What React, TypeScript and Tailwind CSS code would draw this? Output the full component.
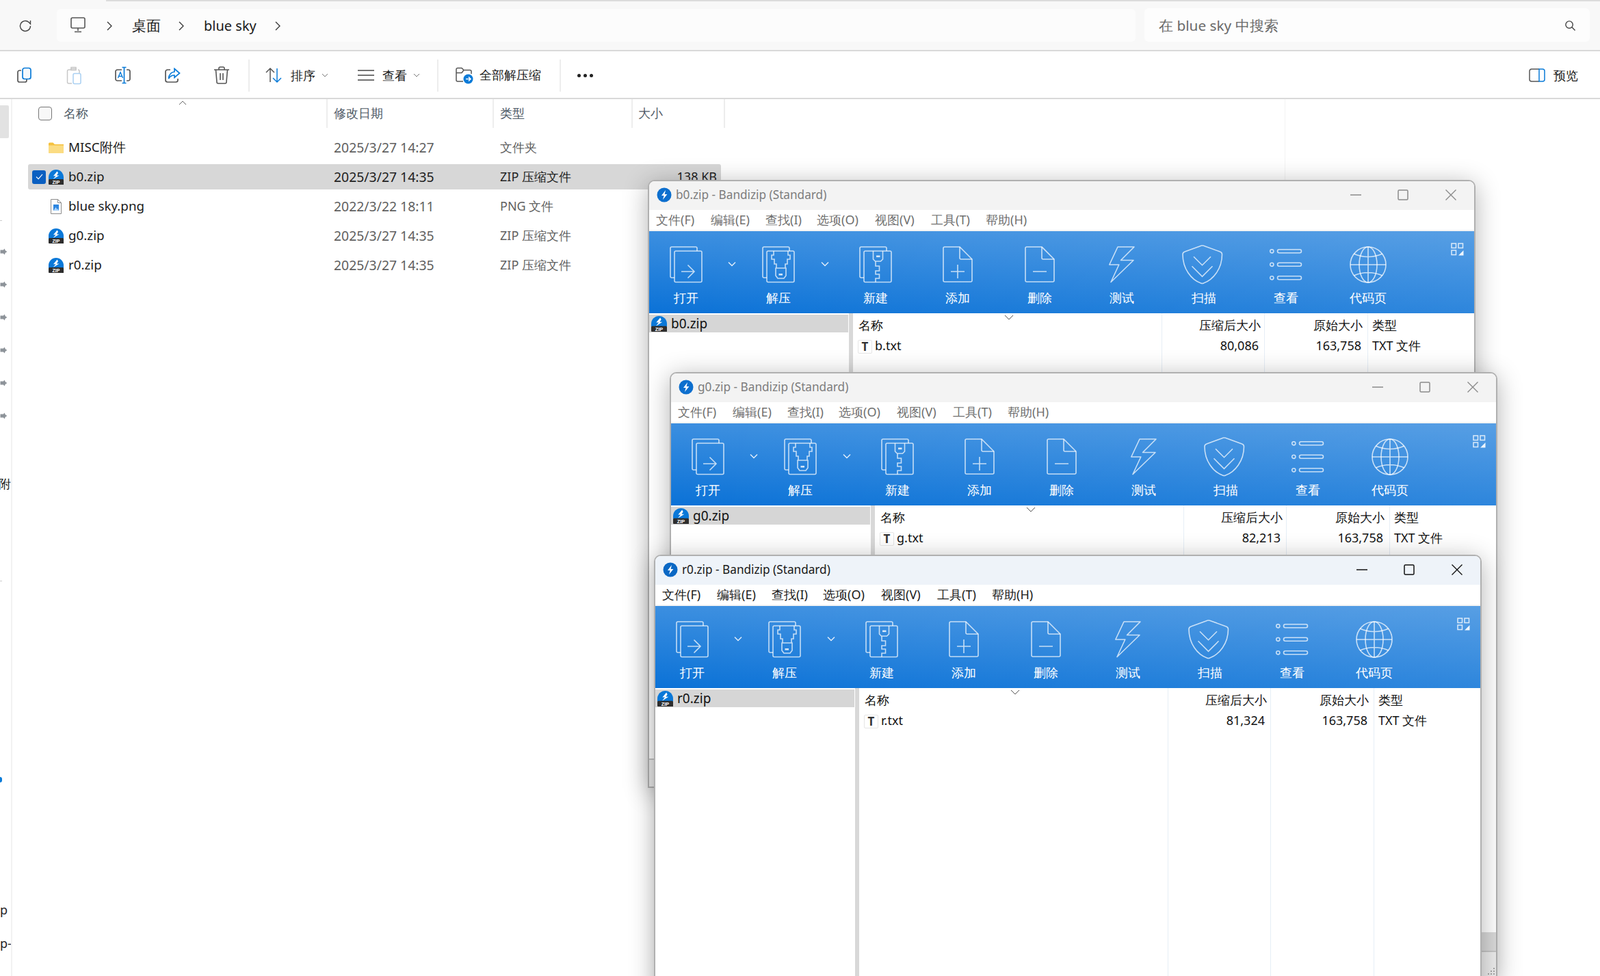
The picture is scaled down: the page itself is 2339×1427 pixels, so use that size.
import React from "react";

const FONT = "font-['Noto_Sans','Noto_Sans_CJK_SC',sans-serif]";
const S = { stroke: "rgba(255,255,255,0.72)", strokeWidth: 1.6, fill: "none" } as const;

function ZipIcon({ small = false }: { small?: boolean }) {
  const size = small ? "w-[23px] h-[23px]" : "w-[22px] h-[22px]";
  return (
    <svg viewBox="0 0 22 22" className={`${size} shrink-0`}>
      <path d="M11 0a11 11 0 0 1 11 11v4H0v-4A11 11 0 0 1 11 0Z" fill="#0a78d8" />
      <path d="M12.6 2.5 7 9.2h3.6L6.6 14l9-5.6h-3.8l2.2-3.4Z" fill="#fff" />
      <path d="M1.5 14h19a1.5 1.5 0 0 1 1.5 1.5V22H1a1 1 0 0 1-1-1v-5.5A1.5 1.5 0 0 1 1.5 14Z" fill="#2e2e2e" />
      <text x="11" y="20.8" textAnchor="middle" fontSize="7" fontWeight="700" fill="#fff" fontFamily="Liberation Sans">ZIP</text>
    </svg>
  );
}

function TitleIcon({ active }: { active: boolean }) {
  return (
    <svg viewBox="0 0 22 22" className="w-[22px] h-[22px] shrink-0">
      <circle cx="11" cy="11" r="10.5" fill={active ? "#0b68c4" : "#0d6fce"} />
      <path d="M13 4 7 12h3.6l-1.6 6 6.4-8h-3.8Z" fill="#fff" />
    </svg>
  );
}

function OpenIcon() {
  return (
    <svg viewBox="0 0 48 54" className="w-[48px] h-[54px]" {...S}>
      <path d="M7 46H3a2 2 0 0 1-2-2V3a2 2 0 0 1 2-2h35a2 2 0 0 1 2 2v4" />
      <rect x="7" y="7" width="40" height="45.5" rx="2" />
      <path d="M17 37h19M26.5 27.5 36 37l-9.5 9.5" />
    </svg>
  );
}
function ExtractIcon() {
  return (
    <svg viewBox="0 0 48 54" className="w-[48px] h-[54px]" {...S}>
      <path d="M7 46H3a2 2 0 0 1-2-2V3a2 2 0 0 1 2-2h35a2 2 0 0 1 2 2v4" />
      <rect x="7" y="7" width="40" height="45.5" rx="2" />
      <path d="M17 7v6h-3v6h4v7h3v6h-1v11l3 4h9l3-4V32h-1v-6h3v-7h4v-6h-3V7M20 32h14" />
      <rect x="24.5" y="40" width="5.5" height="2.6" fill="rgba(255,255,255,0.8)" stroke="none" />
    </svg>
  );
}
function NewIcon() {
  return (
    <svg viewBox="0 0 48 54" className="w-[48px] h-[54px]" {...S}>
      <path d="M7 46H3a2 2 0 0 1-2-2V3a2 2 0 0 1 2-2h35a2 2 0 0 1 2 2v4" />
      <rect x="7" y="7" width="40" height="45.5" rx="2" />
      <path d="M20.5 7v12l3 3h8l3-3V7M24 22v7h5.5v7H24v5h5.5v6H24v5.5" />
      <rect x="25" y="13.5" width="5.5" height="2.6" fill="rgba(255,255,255,0.8)" stroke="none" />
    </svg>
  );
}
function DocIcon({ plus }: { plus: boolean }) {
  return (
    <svg viewBox="0 0 44 54" className="w-[44px] h-[54px]" {...S}>
      <path d="M3 1h22l18 18v31a2 2 0 0 1-2 2H3a2 2 0 0 1-2-2V3a2 2 0 0 1 2-2Z" />
      <path d="M25 1v16a2 2 0 0 0 2 2h16" />
      <path d={plus ? "M12 37h20M22 27v20" : "M12 37h20"} />
    </svg>
  );
}
function BoltIcon() {
  return (
    <svg viewBox="0 0 38 54" className="w-[38px] h-[54px]" {...S}>
      <path d="M13 1h24L17.5 20.5H36L3 52.5 14.8 27H.8Z" strokeLinejoin="round" />
    </svg>
  );
}
function ShieldIcon() {
  return (
    <svg viewBox="0 0 60 58" className="w-[60px] h-[58px]" {...S}>
      <path d="M29.5 1q2 0 4 1l22 8q3 1 3 4c0 21-13 37-27 42q-2 1-4 0C13.500 51 1 35 1 14q0-3 3-4l22-8q2-1 3.500-1Z" />
      <path d="M17 17.300 29.500 29.700 42 17.300M14.500 31.300 29.500 46.300 44.500 31.300" />
    </svg>
  );
}
function ListIcon() {
  return (
    <svg viewBox="0 0 48 46" className="w-[48px] h-[46px]" {...S}>
      <circle cx="3.300" cy="3.300" r="2.600" />
      <circle cx="3.300" cy="22.800" r="2.600" />
      <circle cx="3.300" cy="42.300" r="2.600" />
      <rect x="11.500" y="0.800" width="35" height="5" rx="2.500" />
      <rect x="11.500" y="20.300" width="35" height="5" rx="2.500" />
      <rect x="11.500" y="39.800" width="35" height="5" rx="2.500" />
    </svg>
  );
}
function GlobeIcon() {
  return (
    <svg viewBox="0 0 54 54" className="w-[54px] h-[54px]" {...S}>
      <ellipse cx="27" cy="27" rx="26" ry="26" />
      <ellipse cx="27" cy="27" rx="13" ry="26" />
      <path d="M27 1v52M1 27h52M6 11q21 9 42 0M6 43q21-9 42 0" />
    </svg>
  );
}
function Chev() {
  return (
    <svg viewBox="0 0 12 8" className="w-[12px] h-[8px]" fill="none" stroke="rgba(255,255,255,0.85)" strokeWidth="1.500">
      <path d="M1 1.500 6 6.500 11 1.500" />
    </svg>
  );
}

const tools: { w: string; label?: string; icon: React.ReactNode; lab?: string }[] = [
  { w: "w-[108px]", label: "打开", icon: <OpenIcon /> },
  { w: "w-[26px]", icon: <Chev /> },
  { w: "w-[110px]", label: "解压", icon: <ExtractIcon /> },
  { w: "w-[26px]", icon: <Chev /> },
  { w: "w-[122px]", label: "新建", icon: <NewIcon /> },
  { w: "w-[118px]", label: "添加", icon: <DocIcon plus /> },
  { w: "w-[122px]", label: "删除", icon: <DocIcon plus={false} /> },
  { w: "w-[118px]", label: "测试", icon: <BoltIcon /> },
  { w: "w-[118px]", label: "扫描", icon: <ShieldIcon />, lab: "ml-[4px]" },
  { w: "w-[126px]", label: "查看", icon: <ListIcon /> },
  { w: "w-[114px]", label: "代码页", icon: <GlobeIcon /> },
];

const menus: [string, string][] = [
  ["文件(F)", "w-[80px]"],
  ["编辑(E)", "w-[80px]"],
  ["查找(I)", "w-[75px]"],
  ["选项(O)", "w-[85px]"],
  ["视图(V)", "w-[82px]"],
  ["工具(T)", "w-[80px]"],
  ["帮助(H)", "w-[80px]"],
];

function Win({ pos, zip, file, comp, active }: { pos: string; zip: string; file: string; comp: string; active: boolean }) {
  const ctl = active ? "#111" : "#8a8a8a";
  return (
    <div className={`absolute ${pos} w-[1210px] h-[889px] flex flex-col bg-white border-2 border-[#b0b0b0] rounded-t-[10px] shadow-[0_6px_36px_rgba(0,0,0,0.3)] overflow-hidden text-[18px] text-[#111]`}>
      <div className={`h-[42px] shrink-0 flex items-center pl-[11px] pb-[2px] ${active ? "bg-[#eef3f9]" : "bg-[#f3f3f3]"}`}>
        <TitleIcon active={active} />
        <span className={`ml-[6px] text-[17.2px] ${active ? "text-[#1a1a1a]" : "text-[#7d7d7d]"}`}>{zip} - Bandizip (Standard)</span>
        <div className="ml-auto flex items-center">
          <div className="w-[64px] flex justify-center">
            <svg viewBox="0 0 16 16" className="w-[16px] h-[16px]" stroke={ctl} strokeWidth="1.400"><path d="M0 8h16" /></svg>
          </div>
          <div className="w-[73px] flex justify-center">
            <svg viewBox="0 0 16 16" className="w-[16px] h-[16px]" fill="none" stroke={ctl} strokeWidth="1.500"><rect x="1" y="1" width="14" height="14" rx="1.500" /></svg>
          </div>
          <div className="w-[68px] flex justify-center">
            <svg viewBox="0 0 16 16" className="w-[16px] h-[16px]" stroke={ctl} strokeWidth="1.400"><path d="M.5.5l15 15M15.500.5l-15 15" /></svg>
          </div>
        </div>
      </div>
      <div className={`h-[31px] shrink-0 flex items-center pl-[10px] border-b-2 border-[#f4f4f4] ${active ? "text-[#1a1a1a]" : "text-[#6f6f6f]"}`}>
        {menus.map(([m, w]) => (
          <span key={m} className={w}>{m}</span>
        ))}
      </div>
      <div className="h-[120px] shrink-0 flex bg-[linear-gradient(90deg,rgba(255,255,255,0),rgba(255,255,255,0.14)),linear-gradient(180deg,#3c8fe0,#0b72d7)] text-white">
        {tools.map((t, i) =>
          t.label ? (
            <div key={i} className={`${t.w} shrink-0 flex flex-col items-center pt-[21px]`}>
              <div className="h-[55px] flex items-center justify-center">{t.icon}</div>
              <span className={`mt-[9px] leading-[24px] ${t.lab ?? ""}`}>{t.label}</span>
            </div>
          ) : (
            <div key={i} className={`${t.w} shrink-0 flex justify-center pt-[44px]`}>{t.icon}</div>
          )
        )}
        <div className="ml-auto pr-[15px] pt-[17px]">
          <svg viewBox="0 0 19 19" className="w-[19px] h-[19px]" fill="none" stroke="rgba(255,255,255,0.8)" strokeWidth="1.500">
            <rect x="1" y="1" width="6.500" height="6.500" />
            <rect x="11" y="1" width="6.500" height="6.500" />
            <rect x="1" y="11" width="6.500" height="6.500" />
            <path d="M18.500 11v7.500H11Z" fill="rgba(255,255,255,0.9)" stroke="none" />
          </svg>
        </div>
      </div>
      <div className="flex-1 flex min-h-0">
        <div className="w-[292px] shrink-0 pt-[2px]">
          <div className="h-[26px] w-[291px] bg-[#d6d6d6] flex items-center pl-[3px]">
            <ZipIcon small />
            <span className="ml-[6px] text-[19px]">{zip}</span>
          </div>
        </div>
        <div className="w-[6px] shrink-0 bg-[#d8d8d8]" />
        <div className="flex-1 flex relative">
          <svg viewBox="0 0 14 8" className="absolute left-[221px] top-[2px] w-[14px] h-[8px]" fill="none" stroke="#555" strokeWidth="1">
            <path d="M1 1l6 6 6-6" />
          </svg>
          <div className="w-[451px]">
            <div className="h-[34px] flex items-center pl-[8px]">名称</div>
            <div className="h-[26px] flex items-center pl-[7px]">
              <div className="w-[21px] h-[20px] mt-[3px] border border-[#e6e6e6] rounded-[2px] flex items-center justify-center font-['Liberation_Serif',serif] font-bold text-[17px] leading-none text-[#333]">T</div>
              <span className="ml-[4px]">{file}</span>
            </div>
          </div>
          <div className="w-[150px] border-l border-[#e6eef6] text-right">
            <div className="h-[34px] flex items-center justify-end pr-[5px]">压缩后大小</div>
            <div className="h-[26px] flex items-center justify-end pr-[8px]">{comp}</div>
          </div>
          <div className="w-[151px] border-l border-[#e6eef6] text-right">
            <div className="h-[34px] flex items-center justify-end pr-[7px]">原始大小</div>
            <div className="h-[26px] flex items-center justify-end pr-[9px]">163,758</div>
          </div>
          <div className="flex-1 border-l border-[#e6eef6] pl-[6px]">
            <div className="h-[34px] flex items-center">类型</div>
            <div className="h-[26px] flex items-center">TXT 文件</div>
          </div>
          <div className="absolute bottom-0 right-0 w-[21px] h-[27px] bg-[#d9d9d9]" />
        </div>
      </div>
      <div className="h-[41px] shrink-0 bg-[#ececec] border-t-2 border-[#c4c4c4] flex justify-end items-start">
        <svg viewBox="0 0 14 14" className="w-[14px] h-[14px] mt-[21px] mr-[1px]" fill="#8f8f8f">
          <circle cx="12" cy="3" r="1" /><circle cx="12" cy="7" r="1" /><circle cx="8" cy="7" r="1" />
          <circle cx="12" cy="11" r="1" /><circle cx="8" cy="11" r="1" /><circle cx="4" cy="11" r="1" />
        </svg>
      </div>
    </div>
  );
}

function FolderIcon() {
  return (
    <svg viewBox="0 0 22 16" className="w-[22px] h-[16px] shrink-0">
      <path d="M0 2a1.500 1.500 0 0 1 1.500-1.500h5L9 3h13v11.500a1.500 1.500 0 0 1-1.500 1.500h-19A1.500 1.500 0 0 1 0 14.500Z" fill="#f5c13e" />
      <path d="M0 4.500h22v10a1.500 1.500 0 0 1-1.500 1.500h-19A1.500 1.500 0 0 1 0 14.500Z" fill="#fbdc83" />
    </svg>
  );
}
function PngIcon() {
  return (
    <svg viewBox="0 0 18 22" className="w-[18px] h-[22px] shrink-0">
      <path d="M1.500.5h10l5 5v16h-15Z" fill="#fff" stroke="#8c8c8c" />
      <path d="M11.500.5v5h5" fill="none" stroke="#8c8c8c" />
      <rect x="5" y="8" width="8" height="9" fill="#2d86e0" />
      <path d="M5 17l3.500-5 2 3 1-1 1.500 3Z" fill="#a9d3fb" />
    </svg>
  );
}

const rows: { icon: React.ReactNode; name: string; date: string; type: string; sel?: boolean; size?: string }[] = [
  { icon: <FolderIcon />, name: "MISC附件", date: "2025/3/27 14:27", type: "文件夹" },
  { icon: <ZipIcon />, name: "b0.zip", date: "2025/3/27 14:35", type: "ZIP 压缩文件", sel: true, size: "138 KB" },
  { icon: <PngIcon />, name: "blue sky.png", date: "2022/3/22 18:11", type: "PNG 文件" },
  { icon: <ZipIcon />, name: "g0.zip", date: "2025/3/27 14:35", type: "ZIP 压缩文件" },
  { icon: <ZipIcon />, name: "r0.zip", date: "2025/3/27 14:35", type: "ZIP 压缩文件" },
];

function Pin() {
  return (
    <svg viewBox="0 0 10 10" className="w-[11px] h-[10px]" fill="#8d9399">
      <path d="M0 2.500h4.500L6 .5l1.500 3L10 5 7.500 6.500 6 9.500 4.500 7.500H0Z" />
    </svg>
  );
}

function TopChev() {
  return (
    <svg viewBox="0 0 8 14" className="w-[8px] h-[14px]" fill="none" stroke="#333" strokeWidth="1.300"><path d="M1 1l6 6-6 6" /></svg>
  );
}

function SmallDown() {
  return (
    <svg viewBox="0 0 10 6" className="w-[10px] h-[6px]" fill="none" stroke="#777" strokeWidth="1"><path d="M1 1l4 4 4-4" /></svg>
  );
}

const Sep = () => <div className="w-[2px] h-[47px] bg-[#ededed] shrink-0" />;

export default function App() {
  return (
    <div className={`relative w-[2339px] h-[1427px] overflow-hidden bg-white ${FONT} text-[18px] text-[#1a1a1a]`}>
      {/* address bar */}
      <div className="h-[75px] bg-[#f8f8f8] border-b-2 border-[#d9d9d9] flex pt-[13px] relative">
        <div className="absolute left-[155px] right-0 top-0 h-[2px] bg-[#dcdcdc]" />
        <div className="w-[83px] shrink-0 flex justify-center pt-[15px]">
          <div className="mr-[9px]">
            <svg viewBox="0 0 20 20" className="w-[20px] h-[20px]" fill="none" stroke="#444" strokeWidth="1.400">
              <path d="M17.500 10a7.500 7.500 0 1 1-2.400-5.500L17.500 7V2" />
            </svg>
          </div>
        </div>
        <div className="w-[1577px] h-[48px] bg-[#fcfcfc] rounded-[6px] flex items-center text-[21px] pl-[19px] pt-[2px]">
          <svg viewBox="0 0 22 24" className="w-[22px] h-[24px] -mt-[3px] ml-[1px]" fill="none" stroke="#555" strokeWidth="1.600">
            <rect x="1" y="1" width="20" height="15" rx="2" />
            <path d="M11 16v4M6 21.500h10" />
          </svg>
          <div className="ml-[31px]"><TopChev /></div>
          <span className="ml-[29px]">桌面</span>
          <div className="ml-[26px]"><TopChev /></div>
          <span className="ml-[29px] text-[20px]">blue sky</span>
          <div className="ml-[27px]"><TopChev /></div>
        </div>
        <div className="w-[651px] h-[49px] ml-[13px] -mt-[1px] bg-[#fdfdfd] rounded-[6px] flex items-center pl-[21px] pr-[20px] pt-[2px] text-[20.800px] text-[#6a6a6a]">
          <span>在 blue sky 中搜索</span>
          <svg viewBox="0 0 18 18" className="w-[17px] h-[17px] ml-auto" fill="none" stroke="#444" strokeWidth="1.500">
            <circle cx="7.500" cy="7.500" r="5.500" /><path d="M11.500 11.500 16.500 16.500" />
          </svg>
        </div>
      </div>
      {/* command bar */}
      <div className="h-[70px] border-b-2 border-[#d9d9d9] flex items-center pt-[2px]">
        <div className="w-[72px] flex justify-center">
          <svg viewBox="0 0 24 24" className="w-[24px] h-[24px]" fill="none" strokeWidth="1.700">
            <path d="M7 5H4.500A2.500 2.500 0 0 0 2 7.500v12A2.500 2.500 0 0 0 4.500 22h8a2.500 2.500 0 0 0 2.500-2.500V18" stroke="#555" />
            <rect x="9" y="1.500" width="12" height="16" rx="3" stroke="#0a7bd8" fill="#f4f8fc" />
          </svg>
        </div>
        <div className="w-[72px] flex justify-center">
          <svg viewBox="0 0 24 28" className="w-[24px] h-[28px]" fill="none" strokeWidth="1.500">
            <path d="M8 6H4.500A2 2 0 0 0 2.500 8v16a2 2 0 0 0 2 2H9M7 4.500h9M8 2.500h7v4H8ZM18 6a2 2 0 0 1 2 2v3" stroke="#c8c8c8" />
            <rect x="11" y="11.500" width="11" height="15" rx="2" stroke="#a9d0f2" />
          </svg>
        </div>
        <div className="w-[72px] flex justify-center">
          <svg viewBox="0 0 26 26" className="w-[26px] h-[26px]" fill="none" strokeWidth="1.700">
            <path d="M11 5H4.500A2.500 2.500 0 0 0 2 7.500v11A2.500 2.500 0 0 0 4.500 21H11M18 5h2.500A2.500 2.500 0 0 1 23 7.500v11a2.500 2.500 0 0 1-2.500 2.500H18" stroke="#555" />
            <path d="M11.500 1.500h6M14.500 1.500v23M11.500 24.500h6" stroke="#0a7bd8" />
            <path d="M5.500 17 9 8.500 12.500 17M7 14.500h4" stroke="#0a7bd8" strokeWidth="1.400" />
          </svg>
        </div>
        <div className="w-[72px] flex justify-center">
          <svg viewBox="0 0 24 24" className="w-[24px] h-[24px]" fill="none" strokeWidth="1.700">
            <path d="M9 4H5a3 3 0 0 0-3 3v12a3 3 0 0 0 3 3h12a3 3 0 0 0 3-3v-2" stroke="#555" />
            <path d="M15 2.500 22.500 9 15 15.500V12c-4 0-6.500 1.500-8.500 5 .5-6 3.500-9.500 8.500-10Z" stroke="#0a7bd8" />
          </svg>
        </div>
        <div className="w-[72px] flex justify-center">
          <svg viewBox="0 0 24 26" className="w-[24px] h-[26px]" fill="none" stroke="#555" strokeWidth="1.600">
            <path d="M1 5h22M8 5V3a2 2 0 0 1 2-2h4a2 2 0 0 1 2 2v2M3.500 5l1.500 18a2 2 0 0 0 2 2h10a2 2 0 0 0 2-2L20.500 5M10 10v10M14 10v10" />
          </svg>
        </div>
        <div className="ml-[3px]"><Sep /></div>
        <div className="ml-[23px]">
          <svg viewBox="0 0 24 24" className="w-[24px] h-[24px]" fill="none" strokeWidth="1.500">
            <path d="M7 22V2M1 8l6-6 6 6" stroke="#555" />
            <path d="M17 2v20M11 16l6 6 6-6" stroke="#0a7bd8" />
          </svg>
        </div>
        <span className="ml-[13px]">排序</span>
        <div className="ml-[9px]"><SmallDown /></div>
        <svg viewBox="0 0 24 18" className="ml-[43px] w-[24px] h-[18px]" stroke="#444" strokeWidth="1.500">
          <path d="M0 2h24M0 9h24M0 16h24" />
        </svg>
        <span className="ml-[12px]">查看</span>
        <div className="ml-[9px]"><SmallDown /></div>
        <div className="ml-[25px]"><Sep /></div>
        <svg viewBox="0 0 26 26" className="ml-[25px] w-[26px] h-[26px]" fill="none" stroke="#555" strokeWidth="1.500">
          <path d="M11 22H3a2 2 0 0 1-2-2V4.500a2 2 0 0 1 2-2h6l3 3h9a2 2 0 0 1 2 2V11M1 9.500h8l3-4" />
          <circle cx="18.500" cy="18.500" r="7" fill="#0a7bd8" stroke="none" />
          <path d="M15 18.500h7M19 15.500l3 3-3 3" stroke="#fff" />
        </svg>
        <span className="ml-[9px] text-[18.200px]">全部解压缩</span>
        <div className="ml-[27px]"><Sep /></div>
        <div className="ml-[24px] flex gap-[4px]">
          <div className="w-[5px] h-[5px] rounded-full bg-[#222]" />
          <div className="w-[5px] h-[5px] rounded-full bg-[#222]" />
          <div className="w-[5px] h-[5px] rounded-full bg-[#222]" />
        </div>
        <div className="ml-auto flex items-center pr-[32px]">
          <svg viewBox="0 0 24 20" className="w-[24px] h-[20px]" fill="none" strokeWidth="1.500">
            <path d="M15 1H4a3 3 0 0 0-3 3v12a3 3 0 0 0 3 3h11" stroke="#555" />
            <path d="M15 1h5a3 3 0 0 1 3 3v12a3 3 0 0 1-3 3h-5Z" stroke="#0a7bd8" />
          </svg>
          <span className="ml-[12px]">预览</span>
        </div>
      </div>
      {/* body */}
      <div className="flex h-[1282px]">
        <div className="w-[18px] shrink-0 border-r-2 border-[#f2f2f2] overflow-hidden flex flex-col items-start">
          <div className="mt-[9px] w-[13px] h-[48px] bg-[#e2e2e2] rounded-r-[2px]" />
          <div className="mt-[120px] w-[3px] h-[1px] bg-[#ccc]" />
          <div className="mt-[40px] flex flex-col gap-[38px]">
            <Pin /><Pin /><Pin /><Pin /><Pin /><Pin />
          </div>
          <div className="mt-[81px] w-[16px] h-[22px] flex justify-end overflow-hidden whitespace-nowrap">
            <span className="shrink-0">附</span>
          </div>
          <div className="mt-[133px] w-[3px] h-[1px] bg-[#ccc]" />
          <div className="mt-[286px] w-[3px] h-[8px] rounded-r-full bg-[#0a7bd8]" />
          <div className="mt-[173px] h-[26px] leading-[26px] text-[#222]">p</div>
          <div className="mt-[23px] h-[26px] leading-[26px] text-[#222]">p-</div>
        </div>
        <div className="flex-1 relative">
          <div className="flex h-[42px]">
            <div className="w-[461px] border-r-2 border-[#ededed] flex items-center pl-[38px] pb-[2px] relative text-[#4f5b67]">
              <div className="w-[20px] h-[20px] mt-[2px] border border-[#777] rounded-[4px] bg-[#f8f8f8]" />
              <span className="ml-[17px]">名称</span>
              <svg viewBox="0 0 12 7" className="absolute left-[243px] top-[2px] w-[12px] h-[7px]" fill="none" stroke="#666" strokeWidth="1"><path d="M1 6l5-5 5 5" /></svg>
            </div>
            <div className="w-[243px] border-r-2 border-[#ededed] flex items-center pl-[9px] pb-[2px] text-[#4f5b67]">修改日期</div>
            <div className="w-[203px] border-r-2 border-[#ededed] flex items-center pl-[9px] pb-[2px] text-[#4f5b67]">类型</div>
            <div className="w-[135px] border-r-2 border-[#ededed] flex items-center pl-[8px] pb-[2px] text-[#4f5b67]">大小</div>
            <div className="flex-1 relative">
              <div className="absolute left-[818px] top-0 h-[1300px] w-[1px] bg-[#f2f2f2]" />
            </div>
          </div>
          <div className="mt-[10px] ml-[23px] w-[1013px] flex flex-col gap-[6px]">
            {rows.map((r) => (
              <div key={r.name} className={`h-[37px] flex items-center rounded-[3px] ${r.sel ? "bg-[#d7d7d7]" : ""}`}>
                <div className="w-[447px] shrink-0 flex items-center pl-[6px]">
                  <div className="w-[20px] h-[20px] shrink-0">
                    {r.sel && (
                      <div className="w-[20px] h-[20px] rounded-[3px] bg-[#0a5fc1] flex items-center justify-center">
                        <svg viewBox="0 0 12 10" className="w-[11px] h-[9px]" fill="none" stroke="#fff" strokeWidth="1.200"><path d="M1 5l3.500 3.500L11 1" /></svg>
                      </div>
                    )}
                  </div>
                  <div className="ml-[4px] w-[22px] flex justify-center shrink-0">{r.icon}</div>
                  <span className="ml-[7px] text-[18.800px]">{r.name}</span>
                </div>
                <span className={`w-[243px] shrink-0 text-[19.400px] ${r.sel ? "text-[#222]" : "text-[#5f5f5f]"}`}>{r.date}</span>
                <span className={`${r.sel ? "text-[#222]" : "text-[#5f5f5f]"}`}>{r.type}</span>
                {r.size && <span className="ml-auto pr-[6px] text-[#222]">{r.size}</span>}
              </div>
            ))}
          </div>
        </div>
      </div>
      <Win pos="left-[947px] top-[263px]" zip="b0.zip" file="b.txt" comp="80,086" active={false} />
      <Win pos="left-[979px] top-[544px]" zip="g0.zip" file="g.txt" comp="82,213" active={false} />
      <Win pos="left-[956px] top-[811px]" zip="r0.zip" file="r.txt" comp="81,324" active />
    </div>
  );
}
